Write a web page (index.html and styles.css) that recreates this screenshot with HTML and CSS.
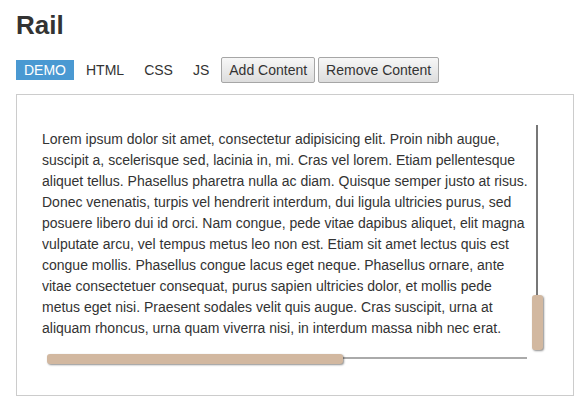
FILE: index.html
```html
<!DOCTYPE html>
<html lang="en">
  <head>
    <meta charset="UTF-8" />
    <title>Rail</title>
    <link rel="stylesheet" href="styles.css">
  </head>
  <body>
    <h1>Rail</h1>

    <div class="toolbar">
      <span class="tab active">DEMO</span>
      <span class="tab">HTML</span>
      <span class="tab">CSS</span>
      <span class="tab">JS</span>
      <button class="btn">Add Content</button>
      <button class="btn">Remove Content</button>
    </div>

    <div class="panel">
      <div class="viewport">
        <p class="content">Lorem ipsum dolor sit amet, consectetur adipisicing elit. Proin nibh augue, suscipit a, scelerisque sed, lacinia in, mi. Cras vel lorem. Etiam pellentesque aliquet tellus. Phasellus pharetra nulla ac diam. Quisque semper justo at risus. Donec venenatis, turpis vel hendrerit interdum, dui ligula ultricies purus, sed posuere libero dui id orci. Nam congue, pede vitae dapibus aliquet, elit magna vulputate arcu, vel tempus metus leo non est. Etiam sit amet lectus quis est congue mollis. Phasellus congue lacus eget neque. Phasellus ornare, ante vitae consectetuer consequat, purus sapien ultricies dolor, et mollis pede metus eget nisi. Praesent sodales velit quis augue. Cras suscipit, urna at aliquam rhoncus, urna quam viverra nisi, in interdum massa nibh nec erat.</p>
      </div>

      <!-- scroll rails -->
      <div class="rail rail-y"></div>
      <div class="thumb thumb-y"></div>
      <div class="rail rail-x"></div>
      <div class="thumb thumb-x"></div>
    </div>
  </body>
</html>
```

FILE: styles.css
```css
* {
  box-sizing: border-box;
}

body {
  margin: 0;
  padding: 10px 10px 0 16px;
  font-family: "Liberation Sans", Arial, sans-serif;
  font-size: 14px;
  color: #333;
  background: #fff;
}

h1 {
  margin: 0;
  font-size: 26px;
  line-height: 30px;
  font-weight: bold;
}

.toolbar {
  display: flex;
  align-items: center;
  gap: 4px;
  margin-top: 17px;
  height: 26px;
}

.tab {
  padding: 0 8px;
  line-height: 20px;
  color: #333;
}

.tab.active {
  background-color: #4a99d2;
  color: #fff;
}

.btn {
  height: 26px;
  padding: 0 7px;
  font-family: "Liberation Sans", Arial, sans-serif;
  font-size: 14px;
  color: #333;
  background: linear-gradient(#f7f7f7, #dddddd);
  border: 1px solid #a6a6a6;
  border-radius: 2px;
}

.btn + .btn {
  margin-left: -1px;
}

.panel {
  position: relative;
  width: 558px;
  height: 302px;
  margin-top: 11px;
  border: 1px solid #ccc;
  padding: 34px 0 0 25px;
}

.viewport {
  width: 488px;
  height: 210px;
  overflow: hidden;
}

.content {
  margin: 0;
  line-height: 21px;
}

.rail {
  position: absolute;
}

.rail-y {
  left: 519px;
  top: 30px;
  width: 2px;
  height: 222px;
  background: #777;
}

.rail-x {
  left: 31px;
  top: 262px;
  width: 479px;
  height: 2px;
  background: #aaa;
}

.thumb {
  position: absolute;
  background: #d2b8a0;
  border-radius: 3px;
  box-shadow: 1px 1px 2px rgba(0, 0, 0, 0.45);
}

.thumb-y {
  left: 515px;
  top: 200px;
  width: 11px;
  height: 55px;
}

.thumb-x {
  left: 30px;
  top: 259px;
  width: 296px;
  height: 10px;
}
```
